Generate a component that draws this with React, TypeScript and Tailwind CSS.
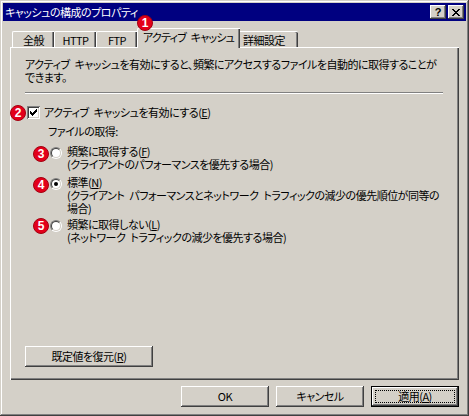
import type { ReactNode } from 'react'

// Windows 2000 classic 3D edges
const raised =
  'shadow-[inset_-1px_-1px_#404040,inset_1px_1px_#ffffff,inset_-2px_-2px_#808080]'
const windowEdge =
  'shadow-[inset_-1px_-1px_#404040,inset_1px_1px_#d4d0c8,inset_-2px_-2px_#808080,inset_2px_2px_#ffffff]'
const sunken =
  'shadow-[inset_1px_1px_#808080,inset_-1px_-1px_#ffffff,inset_2px_2px_#404040,inset_-2px_-2px_#d4d0c8]'

// the half-width gap between words, as MS UI Gothic draws it
const SP = '\u2002'

const Key = ({ children }: { children: ReactNode }) => (
  <span className="underline underline-offset-[1px]">{children}</span>
)

const Badge = ({ n, className }: { n: number; className: string }) => (
  <div
    className={`absolute size-[16px] rounded-full bg-[#e3001b] border border-[#a30010] flex items-center justify-center text-white text-[12px] font-bold leading-none tracking-normal font-['Liberation_Sans',sans-serif] ${className}`}
  >
    {n}
  </div>
)

const CheckMark = () => (
  <svg width="7" height="7" viewBox="0 0 7 7" shapeRendering="crispEdges">
    <path
      d="M6 0h1v1h-1z M5 1h2v1h-2z M0 2h1v1h-1z M4 2h3v1h-3z M0 3h2v1h-2z M3 3h3v1h-3z M0 4h5v1h-5z M1 5h3v1h-3z M2 6h1v1h-1z"
      fill="#000"
    />
  </svg>
)

const CloseGlyph = () => (
  <svg width="8" height="7" viewBox="0 0 8 7" shapeRendering="crispEdges">
    <path
      d="M0 0h2v1h-2z M6 0h2v1h-2z M1 1h2v1h-2z M5 1h2v1h-2z M2 2h4v1h-4z M3 3h2v1h-2z M2 4h4v1h-4z M1 5h2v1h-2z M5 5h2v1h-2z M0 6h2v1h-2z M6 6h2v1h-2z"
      fill="#000"
    />
  </svg>
)

const Radio = ({ checked }: { checked?: boolean }) => (
  <div className="size-[12px] shrink-0 rounded-full border border-t-[#808080] border-l-[#808080] border-b-white border-r-white">
    <div className="size-full rounded-full border border-t-[#404040] border-l-[#404040] border-b-[#d4d0c8] border-r-[#d4d0c8] bg-white flex items-center justify-center">
      {checked && <div className="size-[4px] rounded-full bg-black" />}
    </div>
  </div>
)

const RadioItem = ({
  checked,
  lines,
  className = '',
}: {
  checked?: boolean
  lines: ReactNode[]
  className?: string
}) => (
  <div className={`flex ml-[25px] ${className}`}>
    <div className="h-[13px] flex items-center mt-[1px]">
      <Radio checked={checked} />
    </div>
    <div className="ml-[5px] flex flex-col">
      {lines.map((l, i) => (
        <div key={i} className="h-[13px] whitespace-nowrap">
          {l}
        </div>
      ))}
    </div>
  </div>
)

const tabs = [
  { label: '全般', w: 'w-[42px]' },
  { label: 'HTTP', w: 'w-[42px]' },
  { label: 'FTP', w: 'w-[41px]' },
]

const Button = ({
  children,
  className = '',
}: {
  children: ReactNode
  className?: string
}) => (
  <div
    className={`h-[21px] bg-[#d4d0c8] ${raised} flex items-center justify-center ${className}`}
  >
    {children}
  </div>
)

export default function App() {
  return (
    <div
      className={`w-[469px] h-[416px] bg-[#d4d0c8] p-[3px] ${windowEdge} relative flex flex-col text-[11px] leading-[13px] tracking-[-0.5px] text-black font-['Noto_Sans_CJK_JP','Noto_Sans_CJK_SC',sans-serif] [font-feature-settings:'palt']`}
    >
      {/* title bar */}
      <div className="h-[18px] bg-[#000080] flex items-center justify-between pl-[2px] pr-[2px]">
        <span className="text-white">キャッシュの構成のプロパティ</span>
        <div className="flex gap-[2px]">
          <div
            className={`w-[16px] h-[14px] bg-[#d4d0c8] ${raised} flex items-center justify-center text-[11px] font-bold tracking-normal font-['Liberation_Sans',sans-serif]`}
          >
            ?
          </div>
          <div
            className={`w-[16px] h-[14px] bg-[#d4d0c8] ${raised} flex items-center justify-center`}
          >
            <CloseGlyph />
          </div>
        </div>
      </div>

      <div className="mx-[7px] mt-[7px] flex flex-col">
        {/* tabs */}
        <div className="h-[19px] pl-[2px] flex items-end">
          {tabs.map((t) => (
            <div
              key={t.label}
              className={`${t.w} h-[16px] border-l border-t border-white rounded-tl-[2px] shadow-[inset_-1px_0_#404040,inset_-2px_0_#808080] flex items-center justify-center pt-[1px]`}
            >
              {t.label}
            </div>
          ))}
          <div className="relative z-10 -mb-px w-[103px] h-[20px] bg-[#d4d0c8] border-l border-t border-white rounded-tl-[2px] shadow-[inset_-1px_0_#404040,inset_-2px_0_#808080] flex items-center whitespace-nowrap tracking-[-0.8px] pl-[5px] pb-[2px]">
            アクティブ{SP}キャッシュ
          </div>
          <div className="w-[58px] h-[16px] border-t border-white rounded-tr-[2px] shadow-[inset_-1px_0_#404040,inset_-2px_0_#808080] flex items-center pl-[3px] pt-[1px]">
            詳細設定
          </div>
        </div>

        {/* panel */}
        <div className="h-[333px] border-l border-t border-white shadow-[inset_-1px_-1px_#404040,inset_-2px_-2px_#808080] pl-[14px] pt-[10px] flex flex-col">
          <div className="whitespace-nowrap">
            <div className="h-[13px]">
              アクティブ{SP}キャッシュを有効にすると、頻繁にアクセスするファイルを自動的に取得することが
            </div>
            <div className="h-[13px]">できます。</div>
          </div>

          <div className="mt-[8px] w-[418px] h-[2px] border-t border-[#808080] border-b border-b-white" />

          <div className="mt-[12px] ml-[2px] flex items-center h-[13px]">
            <div
              className={`size-[13px] bg-white ${sunken} flex items-center justify-center`}
            >
              <CheckMark />
            </div>
            <span className="ml-[4px] whitespace-nowrap">
              アクティブ{SP}キャッシュを有効にする(<Key>E</Key>)
            </span>
          </div>

          <div className="mt-[6px] ml-[23px] h-[13px]">ファイルの取得:</div>

          <RadioItem
            className="mt-[7px]"
            lines={[
              <>
                頻繁に取得する(<Key>F</Key>)
              </>,
              '(クライアントのパフォーマンスを優先する場合)',
            ]}
          />
          <RadioItem
            checked
            className="mt-[5px]"
            lines={[
              <>
                標準(<Key>N</Key>)
              </>,
              `(クライアント${SP}パフォーマンスとネットワーク${SP}トラフィックの減少の優先順位が同等の`,
              '場合)',
            ]}
          />
          <RadioItem
            className="mt-[3px]"
            lines={[
              <>
                頻繁に取得しない(<Key>L</Key>)
              </>,
              `(ネットワーク${SP}トラフィックの減少を優先する場合)`,
            ]}
          />

          <div className="mt-auto mb-[13px]">
            <Button className="w-[128px]">
              既定値を復元(<Key>R</Key>)
            </Button>
          </div>
        </div>
      </div>

      {/* dialog buttons */}
      <div className="mt-[6px] mr-[7px] flex justify-end gap-[7px]">
        <Button className="w-[88px]">OK</Button>
        <Button className="w-[88px]">キャンセル</Button>
        <div className="w-[88px] h-[21px] border border-black">
          <div
            className={`size-full ${raised} flex items-center justify-center p-[3px]`}
          >
            <div className="size-full border border-dotted border-black flex items-center justify-center">
              適用(<Key>A</Key>)
            </div>
          </div>
        </div>
      </div>

      <Badge n={1} className="left-[137px] top-[15px] z-20" />
      <Badge n={2} className="left-[10px] top-[105px]" />
      <Badge n={3} className="left-[33px] top-[146px]" />
      <Badge n={4} className="left-[33px] top-[177px]" />
      <Badge n={5} className="left-[33px] top-[218px]" />
    </div>
  )
}
